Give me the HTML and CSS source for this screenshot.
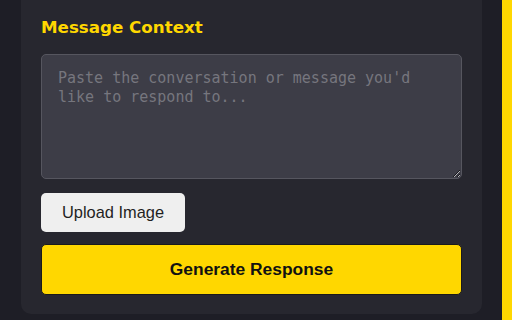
FILE: index.html
```html
<!DOCTYPE html>
<html>
<head>
<meta charset="utf-8">
<link rel="stylesheet" href="styles.css">
</head>
<body>
<div class="page">
  <main class="main">
    <section class="card">
      <h2 class="card-title">Message Context</h2>
      <textarea class="context-input" placeholder="Paste the conversation or message you'd like to respond to..."></textarea>
      <button class="btn-upload" type="button">Upload Image</button>
      <button class="btn-generate" type="button">Generate Response</button>
    </section>
  </main>
  <div class="accent-bar"></div>
</div>
</body>
</html>
```

FILE: styles.css
```css
html, body {
  margin: 0;
  padding: 0;
  height: 100%;
  background: #1e1e26;
  overflow: hidden;
}
.page {
  display: flex;
  height: 320px;
}
.main {
  flex: 1;
  padding: 0 20px 0 21px;
}
.accent-bar {
  width: 10px;
  background: #ffd700;
}
.card {
  background: #27272f;
  border-radius: 0 0 10px 10px;
  padding: 17px 20px 19px;
  display: flex;
  flex-direction: column;
  align-items: flex-start;
}
.card-title {
  margin: 0 0 17px;
  font-family: "DejaVu Sans", sans-serif;
  font-weight: bold;
  font-size: 16.7px;
  line-height: 20px;
  color: #ffd700;
}
.context-input {
  box-sizing: border-box;
  width: 100%;
  height: 125px;
  margin: 0 0 14px;
  padding: 14px 16px;
  background: #3d3d47;
  border: 1px solid #56565f;
  border-radius: 5px;
  color: #ddd;
  font-family: "DejaVu Sans Mono", monospace;
  font-size: 15px;
  line-height: 19px;
  outline: none;
}
.context-input::placeholder {
  color: #76767e;
}
.btn-upload {
  box-sizing: border-box;
  height: 39px;
  padding: 0 21px;
  margin: 0 0 12px;
  background: #efefef;
  border: none;
  border-radius: 5px;
  color: #1f1f1f;
  font-family: "Liberation Sans", Arial, sans-serif;
  font-size: 16.4px;
}
.btn-generate {
  box-sizing: border-box;
  width: 100%;
  height: 51px;
  background: #ffd700;
  border: 1px solid #1a1a1a;
  border-radius: 5px;
  color: #111;
  font-family: "Liberation Sans", Arial, sans-serif;
  font-weight: bold;
  font-size: 17.4px;
}
```
